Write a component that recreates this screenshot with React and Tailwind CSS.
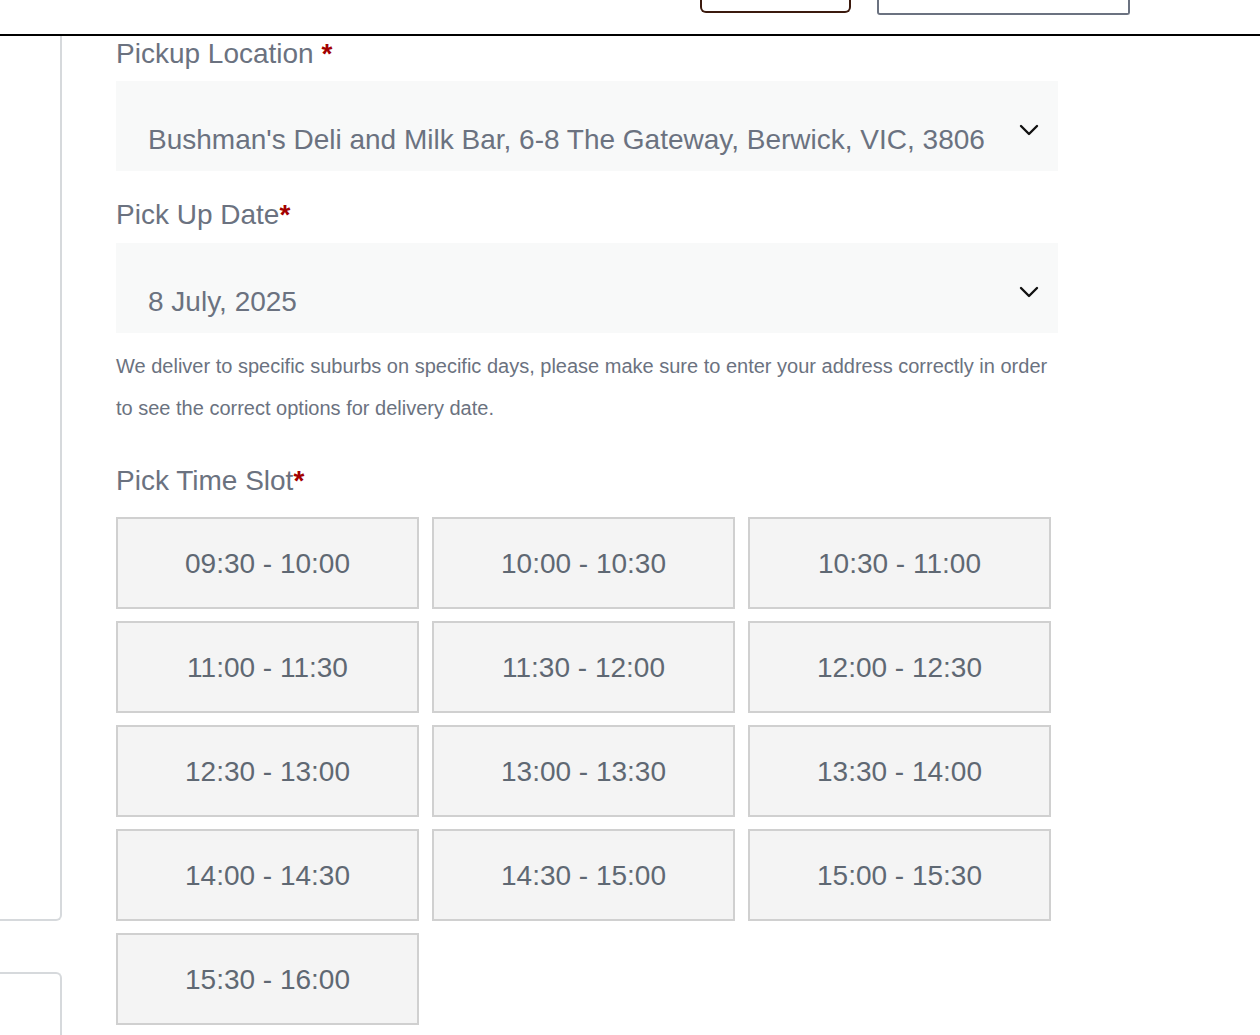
import React from 'react';

const slots = [
  '09:30 - 10:00', '10:00 - 10:30', '10:30 - 11:00',
  '11:00 - 11:30', '11:30 - 12:00', '12:00 - 12:30',
  '12:30 - 13:00', '13:00 - 13:30', '13:30 - 14:00',
  '14:00 - 14:30', '14:30 - 15:00', '15:00 - 15:30',
  '15:30 - 16:00',
];

function Chevron() {
  return (
    <svg width="20" height="12" viewBox="0 0 20 12" fill="none" className="shrink-0">
      <polyline points="2,2 10,10 18,2" stroke="#111" strokeWidth="2.4" strokeLinecap="round" strokeLinejoin="round" />
    </svg>
  );
}

function Label({ children, spaced }) {
  return (
    <p className="text-[28px] leading-[32px] text-[#6b7280]">
      {children}
      <span className="text-[#a30000] font-bold">{spaced ? ' *' : '*'}</span>
    </p>
  );
}

function Select({ value }) {
  return (
    <div className="h-[90px] w-[942px] bg-[#f8f9f9] flex items-start pl-[32px] pr-[19px]">
      <span className="flex-1 pt-[43px] text-[28px] leading-[32px] text-[#6b7280] whitespace-nowrap">{value}</span>
      <span className="pt-[43px]"><Chevron /></span>
    </div>
  );
}

export default function App() {
  return (
    <div className="w-[1260px] h-[1035px] overflow-hidden bg-white" style={{ fontFamily: '"Liberation Sans", Arial, sans-serif' }}>
      {/* header strip */}
      <div className="h-[36px] border-b-2 border-black flex items-start justify-end pr-[130px] gap-[26px]">
        <div className="w-[151px] h-[13px] border-2 border-t-0 border-[#3b1a0e] rounded-b-[6px]" />
        <div className="w-[253px] h-[15px] border-2 border-t-0 border-[#6b7280] rounded-b-[3px]" />
      </div>

      <div className="flex">
        {/* side cards */}
        <div className="w-[62px] shrink-0 flex flex-col gap-[51px]">
          <div className="h-[885px] border-r-2 border-b-2 border-[#d6d9dc] rounded-br-[6px]" />
          <div className="h-[200px] border-r-2 border-t-2 border-[#d6d9dc] rounded-tr-[6px]" />
        </div>

        {/* form */}
        <div className="ml-[54px] pt-[2px]">
          <Label spaced>Pickup Location</Label>
          <div className="mt-[11px]">
            <Select value="Bushman's Deli and Milk Bar, 6-8 The Gateway, Berwick, VIC, 3806" />
          </div>

          <div className="mt-[28px]">
            <Label>Pick Up Date</Label>
          </div>
          <div className="mt-[12px]">
            <Select value="8 July, 2025" />
          </div>

          <p className="mt-[12px] w-[942px] text-[20px] leading-[42px] text-[#6b7280]">
            We deliver to specific suburbs on specific days, please make sure to enter your address correctly in order to see the correct options for delivery date.
          </p>

          <div className="mt-[36px]">
            <Label>Pick Time Slot</Label>
          </div>

          <div className="mt-[20px] grid grid-cols-[303px_303px_303px] gap-x-[13px] gap-y-[12px]">
            {slots.map(s => (
              <button
                key={s}
                className="h-[92px] pt-[2px] bg-[#f4f4f4] border-2 border-[#d0d0d0] text-[28px] text-[#5f6873] flex items-center justify-center"
              >
                {s}
              </button>
            ))}
          </div>
        </div>
      </div>
    </div>
  );
}
